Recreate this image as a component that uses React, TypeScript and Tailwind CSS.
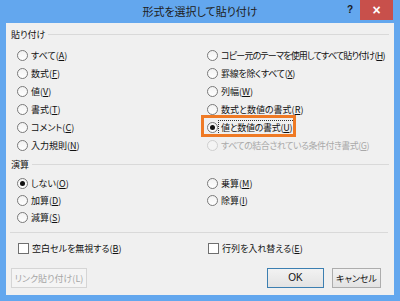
import type { ReactNode } from 'react'

const font = "font-['Meiryo_UI','Noto_Sans_CJK_JP',sans-serif] [font-feature-settings:'palt']"

function Label({ text, k }: { text: string; k: string }) {
  return (
    <>
      {text}(<span className="underline underline-offset-[1px]">{k}</span>)
    </>
  )
}

function Radio({
  text,
  k,
  checked = false,
  disabled = false,
  focus = false,
  highlight = false,
  h = 'h-[18px]',
  tight = '',
}: {
  text: string
  k: string
  checked?: boolean
  disabled?: boolean
  focus?: boolean
  highlight?: boolean
  h?: string
  tight?: string
}) {
  return (
    <div className={`relative flex items-center ${h}`}>
      {highlight ? (
        <span className="absolute -left-[6px] -top-[3px] w-[95px] h-[22px] border-[3px] border-[#ef7a25]" />
      ) : null}
      <span
        className={`w-[11px] h-[11px] rounded-full border flex items-center justify-center shrink-0 ${
          disabled
            ? 'border-[#cfcfcf] bg-[#f4f4f4]'
            : 'border-[#7a7a7a] bg-gradient-to-b from-[#f2f2f2] to-white'
        }`}
      >
        {checked ? <span className="w-[5px] h-[5px] rounded-full bg-[#111]" /> : null}
      </span>
      <span
        className={`ml-[3px] whitespace-nowrap leading-none ${tight} ${
          disabled ? 'text-[#a9a9a9]' : 'text-[#111]'
        } ${focus ? 'outline outline-1 outline-dotted outline-[#333] outline-offset-[2px]' : ''}`}
      >
        <Label text={text} k={k} />
      </span>
    </div>
  )
}

function Check({ text, k }: { text: string; k: string }) {
  return (
    <div className="flex items-center h-[18px]">
      <span className="w-[11px] h-[11px] border border-[#6f6f6f] bg-white shrink-0" />
      <span className="ml-[3px] whitespace-nowrap leading-none text-[#111]">
        <Label text={text} k={k} />
      </span>
    </div>
  )
}

function Group({ title, h }: { title: string; h: string }) {
  return (
    <div className={`flex items-center ${h} pl-[5px] pr-[5px]`}>
      <span className="leading-none text-[#111]">{title}</span>
      <span className="flex-1 h-px bg-[#d9d9d9] ml-[3px]" />
    </div>
  )
}

function Button({
  children,
  w,
  variant = 'normal',
}: {
  children: ReactNode
  w: string
  variant?: 'normal' | 'default' | 'disabled'
}) {
  const styles = {
    normal: 'border-[#adadad] bg-gradient-to-b from-[#f2f2f2] to-[#e3e3e3] text-[#111]',
    default: 'border-[#3c7fb1] bg-gradient-to-b from-[#f2f2f2] to-[#e3e3e3] text-[#111]',
    disabled: 'border-[#d5d5d5] bg-[#f4f4f4] text-[#a6a6a6]',
  }
  return (
    <div
      className={`h-[20px] ${w} border flex items-center justify-center leading-none whitespace-nowrap ${styles[variant]}`}
    >
      {children}
    </div>
  )
}

export default function App() {
  return (
    <div className={`w-[400px] h-[301px] bg-[#63a7ee] flex flex-col overflow-hidden ${font}`}>
      <div className="h-[23px] flex items-start">
        <div className="w-[60px]" />
        <div className="flex-1 h-[23px] flex items-center justify-center text-[11px] text-[#202020]">
          形式を選択して貼り付け
        </div>
        <div className="w-[60px] flex items-start">
          <span className="w-[20px] h-[18px] flex items-center justify-center text-[10px] font-bold text-[#1a1a1a] font-['Liberation_Sans',sans-serif]">
            ?
          </span>
          <span className="w-[33px] h-[20px] bg-[#c8504b] flex items-center justify-center text-white text-[14px] font-bold font-['Liberation_Sans',sans-serif]">
            ×
          </span>
        </div>
      </div>

      <div className="mx-[6px] h-[272px] bg-[#f0f0f0] flex flex-col text-[9px]">
        <Group title="貼り付け" h="h-[23px]" />
        <div className="grid grid-cols-[190px_1fr] pl-[11px]">
          <div className="flex flex-col">
            <Radio text="すべて" k="A" />
            <Radio text="数式" k="F" />
            <Radio text="値" k="V" />
            <Radio text="書式" k="T" />
            <Radio text="コメント" k="C" />
            <Radio text="入力規則" k="N" />
          </div>
          <div className="flex flex-col">
            <Radio text="コピー元のテーマを使用してすべて貼り付け" k="H" tight="tracking-[-0.8px]" />
            <Radio text="罫線を除くすべて" k="X" tight="tracking-[-0.3px]" />
            <Radio text="列幅" k="W" />
            <Radio text="数式と数値の書式" k="R" />
            <Radio
              text="値と数値の書式"
              k="U"
              checked
              focus
              highlight
              tight="tracking-[-0.3px]"
            />
            <Radio text="すべての結合されている条件付き書式" k="G" disabled tight="tracking-[-0.5px]" />
          </div>
        </div>

        <Group title="演算" h="h-[21px]" />
        <div className="grid grid-cols-[190px_1fr] pl-[11px]">
          <div className="flex flex-col">
            <Radio text="しない" k="O" checked h="h-[17px]" />
            <Radio text="加算" k="D" h="h-[17px]" />
            <Radio text="減算" k="S" h="h-[17px]" />
          </div>
          <div className="flex flex-col">
            <Radio text="乗算" k="M" h="h-[17px]" />
            <Radio text="除算" k="I" h="h-[17px]" />
          </div>
        </div>

        <div className="mt-[6px] ml-[4px] mr-[6px] h-px bg-[#d9d9d9]" />

        <div className="mt-[6px] grid grid-cols-[190px_1fr] pl-[12px]">
          <Check text="空白セルを無視する" k="B" />
          <Check text="行列を入れ替える" k="E" />
        </div>

        <div className="mt-[11px] flex items-center pl-[5px] pr-[13px]">
          <Button w="w-[76px]" variant="disabled">
            リンク貼り付け(L)
          </Button>
          <div className="flex-1" />
          <Button w="w-[57px]" variant="default">
            <span className="font-['Liberation_Sans',sans-serif] text-[10px]">OK</span>
          </Button>
          <div className="w-[8px]" />
          <Button w="w-[49px]">キャンセル</Button>
        </div>
      </div>
    </div>
  )
}
